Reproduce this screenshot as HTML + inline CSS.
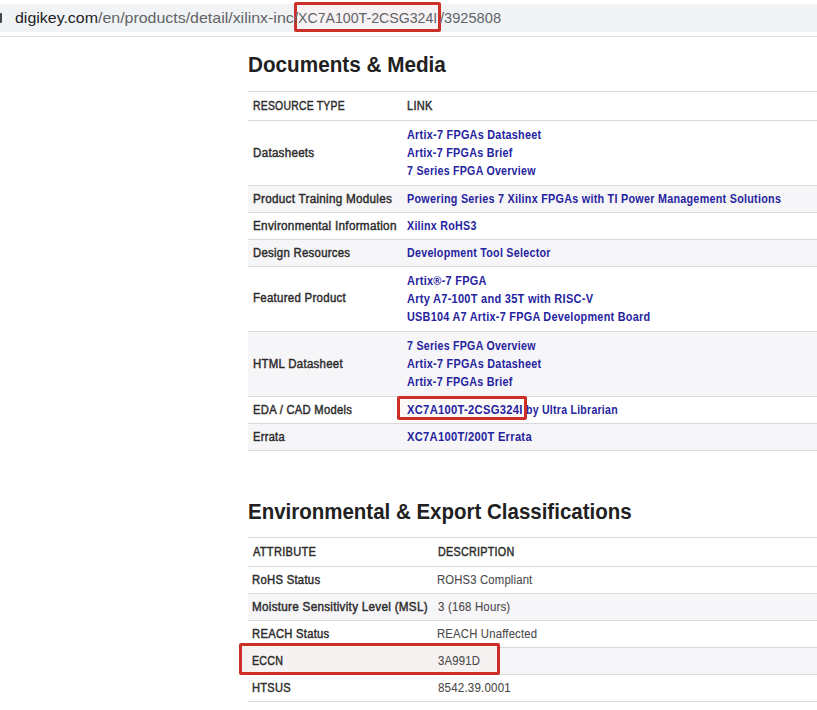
<!DOCTYPE html>
<html><head><meta charset="utf-8"><style>
html,body{margin:0;padding:0;background:#fff;}
body{width:817px;height:710px;overflow:hidden;position:relative;font-family:"Liberation Sans",sans-serif;}
.t{position:absolute;white-space:pre;transform-origin:0 0;}
.r{position:absolute;}
.box{position:absolute;border:3px solid #cc2f28;border-radius:2px;}
#bar{position:absolute;left:0;top:4px;width:817px;height:28px;background:#f1f3f4;}
#barline{position:absolute;left:0;top:36px;width:817px;height:1px;background:#e0e0e0;}
#lock{position:absolute;left:0;top:13px;width:2px;height:10px;background:#44484c;border-radius:0 1px 1px 0;}
</style></head><body>
<div id="bar"></div><div id="barline"></div>
<div id="lock"></div>
<div class="r" style="left:248px;top:186px;width:569px;height:26px;background:#f6f5f7"></div><div class="r" style="left:248px;top:240px;width:569px;height:26px;background:#f6f5f7"></div><div class="r" style="left:248px;top:332px;width:569px;height:64px;background:#f6f5f7"></div><div class="r" style="left:248px;top:424px;width:569px;height:26px;background:#f6f5f7"></div><div class="r" style="left:248px;top:91px;width:569px;height:1px;background:#d9d9d9"></div><div class="r" style="left:248px;top:120px;width:569px;height:1px;background:#d9d9d9"></div><div class="r" style="left:248px;top:185px;width:569px;height:1px;background:#d9d9d9"></div><div class="r" style="left:248px;top:212px;width:569px;height:1px;background:#d9d9d9"></div><div class="r" style="left:248px;top:239px;width:569px;height:1px;background:#d9d9d9"></div><div class="r" style="left:248px;top:266px;width:569px;height:1px;background:#d9d9d9"></div><div class="r" style="left:248px;top:331px;width:569px;height:1px;background:#d9d9d9"></div><div class="r" style="left:248px;top:396px;width:569px;height:1px;background:#d9d9d9"></div><div class="r" style="left:248px;top:423px;width:569px;height:1px;background:#d9d9d9"></div><div class="r" style="left:248px;top:450px;width:569px;height:1px;background:#d9d9d9"></div><div class="r" style="left:248px;top:594px;width:569px;height:26px;background:#f6f5f7"></div><div class="r" style="left:248px;top:648px;width:569px;height:26px;background:#f6f5f7"></div><div class="r" style="left:248px;top:537px;width:569px;height:1px;background:#d9d9d9"></div><div class="r" style="left:248px;top:566px;width:569px;height:1px;background:#d9d9d9"></div><div class="r" style="left:248px;top:593px;width:569px;height:1px;background:#d9d9d9"></div><div class="r" style="left:248px;top:620px;width:569px;height:1px;background:#d9d9d9"></div><div class="r" style="left:248px;top:647px;width:569px;height:1px;background:#d9d9d9"></div><div class="r" style="left:248px;top:674px;width:569px;height:1px;background:#d9d9d9"></div><div class="r" style="left:248px;top:701px;width:569px;height:1px;background:#d9d9d9"></div>
<div class="r" style="left:297px;top:5px;width:141px;height:24px;background:#f7f3f4"></div><div class="r" style="left:400px;top:399px;width:124px;height:18px;background:#fbf8f8"></div><div class="r" style="left:242px;top:646px;width:255px;height:26px;background:#f6f2f2"></div>
<div class="t" style="left:253.07px;top:96.97px;font-size:12.5px;line-height:19px;font-weight:normal;color:#2c2c2c;-webkit-text-stroke:0.45px #2c2c2c;letter-spacing:0.3px;transform:scaleX(0.8304)">RESOURCE TYPE</div><div class="t" style="left:406.52px;top:96.97px;font-size:12.5px;line-height:19px;font-weight:normal;color:#2c2c2c;-webkit-text-stroke:0.45px #2c2c2c;letter-spacing:0.3px;transform:scaleX(0.8818)">LINK</div><div class="t" style="left:252.67px;top:143.67px;font-size:12.5px;line-height:19px;font-weight:normal;color:#2c2c2c;-webkit-text-stroke:0.45px #2c2c2c;letter-spacing:0.3px;transform:scaleX(0.9276)">Datasheets</div><div class="t" style="left:252.57px;top:189.67px;font-size:12.5px;line-height:19px;font-weight:normal;color:#2c2c2c;-webkit-text-stroke:0.45px #2c2c2c;letter-spacing:0.3px;transform:scaleX(0.9342)">Product Training Modules</div><div class="t" style="left:252.56px;top:216.77px;font-size:12.5px;line-height:19px;font-weight:normal;color:#2c2c2c;-webkit-text-stroke:0.45px #2c2c2c;letter-spacing:0.3px;transform:scaleX(0.9366)">Environmental Information</div><div class="t" style="left:252.69px;top:243.87px;font-size:12.5px;line-height:19px;font-weight:normal;color:#2c2c2c;-webkit-text-stroke:0.45px #2c2c2c;letter-spacing:0.3px;transform:scaleX(0.9100)">Design Resources</div><div class="t" style="left:252.68px;top:289.47px;font-size:12.5px;line-height:19px;font-weight:normal;color:#2c2c2c;-webkit-text-stroke:0.45px #2c2c2c;letter-spacing:0.3px;transform:scaleX(0.9174)">Featured Product</div><div class="t" style="left:252.68px;top:354.67px;font-size:12.5px;line-height:19px;font-weight:normal;color:#2c2c2c;-webkit-text-stroke:0.45px #2c2c2c;letter-spacing:0.3px;transform:scaleX(0.9151)">HTML Datasheet</div><div class="t" style="left:252.70px;top:400.97px;font-size:12.5px;line-height:19px;font-weight:normal;color:#2c2c2c;-webkit-text-stroke:0.45px #2c2c2c;letter-spacing:0.3px;transform:scaleX(0.8984)">EDA / CAD Models</div><div class="t" style="left:252.71px;top:427.67px;font-size:12.5px;line-height:19px;font-weight:normal;color:#2c2c2c;-webkit-text-stroke:0.45px #2c2c2c;letter-spacing:0.3px;transform:scaleX(0.8905)">Errata</div><div class="t" style="left:406.80px;top:125.54px;font-size:12px;line-height:18px;font-weight:bold;color:#2624a0;letter-spacing:0.3px;transform:scaleX(0.9028)">Artix-7 FPGAs Datasheet</div><div class="t" style="left:406.80px;top:143.54px;font-size:12px;line-height:18px;font-weight:bold;color:#2624a0;letter-spacing:0.3px;transform:scaleX(0.8967)">Artix-7 FPGAs Brief</div><div class="t" style="left:406.80px;top:161.54px;font-size:12px;line-height:18px;font-weight:bold;color:#2624a0;letter-spacing:0.3px;transform:scaleX(0.8840)">7 Series FPGA Overview</div><div class="t" style="left:406.80px;top:189.54px;font-size:12px;line-height:18px;font-weight:bold;color:#2624a0;letter-spacing:0.3px;transform:scaleX(0.8975)">Powering Series 7 Xilinx FPGAs with TI Power Management Solutions</div><div class="t" style="left:406.80px;top:216.64px;font-size:12px;line-height:18px;font-weight:bold;color:#2624a0;letter-spacing:0.3px;transform:scaleX(0.8888)">Xilinx RoHS3</div><div class="t" style="left:406.80px;top:243.74px;font-size:12px;line-height:18px;font-weight:bold;color:#2624a0;letter-spacing:0.3px;transform:scaleX(0.8907)">Development Tool Selector</div><div class="t" style="left:406.80px;top:271.84px;font-size:12px;line-height:18px;font-weight:bold;color:#2624a0;letter-spacing:0.3px;transform:scaleX(0.9125)">Artix®-7 FPGA</div><div class="t" style="left:406.80px;top:289.84px;font-size:12px;line-height:18px;font-weight:bold;color:#2624a0;letter-spacing:0.3px;transform:scaleX(0.9167)">Arty A7-100T and 35T with RISC-V</div><div class="t" style="left:406.80px;top:307.84px;font-size:12px;line-height:18px;font-weight:bold;color:#2624a0;letter-spacing:0.3px;transform:scaleX(0.9034)">USB104 A7 Artix-7 FPGA Development Board</div><div class="t" style="left:406.80px;top:336.54px;font-size:12px;line-height:18px;font-weight:bold;color:#2624a0;letter-spacing:0.3px;transform:scaleX(0.8840)">7 Series FPGA Overview</div><div class="t" style="left:406.80px;top:354.54px;font-size:12px;line-height:18px;font-weight:bold;color:#2624a0;letter-spacing:0.3px;transform:scaleX(0.9028)">Artix-7 FPGAs Datasheet</div><div class="t" style="left:406.80px;top:372.54px;font-size:12px;line-height:18px;font-weight:bold;color:#2624a0;letter-spacing:0.3px;transform:scaleX(0.8967)">Artix-7 FPGAs Brief</div><div class="t" style="left:406.90px;top:400.84px;font-size:12px;line-height:18px;font-weight:bold;color:#2624a0;letter-spacing:0.3px;transform:scaleX(0.9335)">XC7A100T-2CSG324I</div><div class="t" style="left:525.80px;top:400.84px;font-size:12px;line-height:18px;font-weight:bold;color:#2624a0;letter-spacing:0.3px;transform:scaleX(0.8768)">by Ultra Librarian</div><div class="t" style="left:406.80px;top:427.54px;font-size:12px;line-height:18px;font-weight:bold;color:#2624a0;letter-spacing:0.3px;transform:scaleX(0.9314)">XC7A100T/200T Errata</div><div class="t" style="left:253.30px;top:542.97px;font-size:12.5px;line-height:19px;font-weight:normal;color:#2c2c2c;-webkit-text-stroke:0.45px #2c2c2c;letter-spacing:0.3px;transform:scaleX(0.8855)">ATTRIBUTE</div><div class="t" style="left:437.54px;top:542.97px;font-size:12.5px;line-height:19px;font-weight:normal;color:#2c2c2c;-webkit-text-stroke:0.45px #2c2c2c;letter-spacing:0.3px;transform:scaleX(0.8616)">DESCRIPTION</div><div class="t" style="left:252.40px;top:570.87px;font-size:12.5px;line-height:19px;font-weight:normal;color:#2c2c2c;-webkit-text-stroke:0.45px #2c2c2c;letter-spacing:0.3px;transform:scaleX(0.9040)">RoHS Status</div><div class="t" style="left:252.37px;top:597.57px;font-size:12.5px;line-height:19px;font-weight:normal;color:#2c2c2c;-webkit-text-stroke:0.45px #2c2c2c;letter-spacing:0.3px;transform:scaleX(0.9348)">Moisture Sensitivity Level (MSL)</div><div class="t" style="left:252.40px;top:624.67px;font-size:12.5px;line-height:19px;font-weight:normal;color:#2c2c2c;-webkit-text-stroke:0.45px #2c2c2c;letter-spacing:0.3px;transform:scaleX(0.8983)">REACH Status</div><div class="t" style="left:252.45px;top:651.57px;font-size:12.5px;line-height:19px;font-weight:normal;color:#2c2c2c;-webkit-text-stroke:0.45px #2c2c2c;letter-spacing:0.3px;transform:scaleX(0.8529)">ECCN</div><div class="t" style="left:252.41px;top:678.67px;font-size:12.5px;line-height:19px;font-weight:normal;color:#2c2c2c;-webkit-text-stroke:0.45px #2c2c2c;letter-spacing:0.3px;transform:scaleX(0.8881)">HTSUS</div><div class="t" style="left:437.30px;top:570.87px;font-size:12.5px;line-height:19px;font-weight:normal;color:#4a4a4a;-webkit-text-stroke:0.10px #4a4a4a;letter-spacing:0.2px;transform:scaleX(0.9016)">ROHS3 Compliant</div><div class="t" style="left:438.20px;top:597.57px;font-size:12.5px;line-height:19px;font-weight:normal;color:#4a4a4a;-webkit-text-stroke:0.10px #4a4a4a;letter-spacing:0.2px;transform:scaleX(0.9153)">3 (168 Hours)</div><div class="t" style="left:437.29px;top:624.67px;font-size:12.5px;line-height:19px;font-weight:normal;color:#4a4a4a;-webkit-text-stroke:0.10px #4a4a4a;letter-spacing:0.2px;transform:scaleX(0.9059)">REACH Unaffected</div><div class="t" style="left:438.20px;top:651.57px;font-size:12.5px;line-height:19px;font-weight:normal;color:#4a4a4a;-webkit-text-stroke:0.10px #4a4a4a;letter-spacing:0.2px;transform:scaleX(0.9102)">3A991D</div><div class="t" style="left:438.20px;top:678.67px;font-size:12.5px;line-height:19px;font-weight:normal;color:#4a4a4a;-webkit-text-stroke:0.10px #4a4a4a;letter-spacing:0.2px;transform:scaleX(0.9236)">8542.39.0001</div><div class="t" style="left:247.68px;top:48.20px;font-size:22.5px;line-height:34px;font-weight:bold;color:#212121;letter-spacing:0px;transform:scaleX(0.9202)">Documents &amp; Media</div><div class="t" style="left:247.89px;top:494.70px;font-size:22.5px;line-height:34px;font-weight:bold;color:#212121;letter-spacing:0px;transform:scaleX(0.9104)">Environmental &amp; Export Classifications</div><div class="t" style="z-index:2;left:15.00px;top:6.80px;font-size:15px;line-height:22px;font-weight:normal;color:#202124;letter-spacing:0px;transform:scaleX(1.0623)">digikey.com</div><div class="t" style="z-index:2;left:97.95px;top:6.80px;font-size:15px;line-height:22px;font-weight:normal;color:#5f6368;letter-spacing:0px;transform:scaleX(1.0623)">/en/products/detail/xilinx-inc/</div><div class="t" style="z-index:2;left:298.30px;top:6.80px;font-size:15px;line-height:22px;font-weight:normal;color:#5f6368;letter-spacing:0px;transform:scaleX(0.9432)">XC7A100T-2CSG324I</div><div class="t" style="z-index:2;left:439.60px;top:6.80px;font-size:15px;line-height:22px;font-weight:normal;color:#5f6368;letter-spacing:0px;transform:scaleX(0.9756)">/3925808</div>
<div class="box" style="left:294px;top:2px;width:141px;height:24px"></div><div class="box" style="left:397px;top:396px;width:124px;height:18px"></div><div class="box" style="left:239px;top:643px;width:255px;height:26px"></div>
</body></html>
